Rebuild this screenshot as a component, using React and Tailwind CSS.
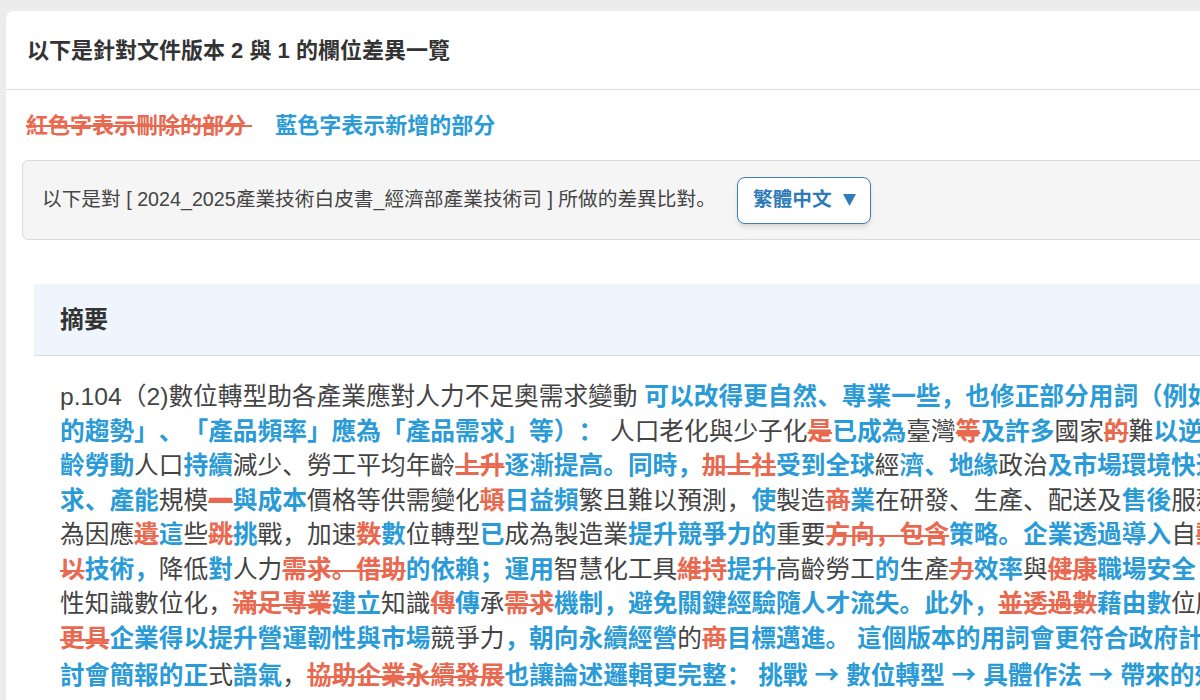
import React from "react";

// n = unchanged, a = added (blue), d = deleted (red, struck through)
const LINES = [
  [["n", "p.104（2)數位轉型助各產業應對人力不足奧需求變動 "], ["a", "可以改得更自然、專業一些，也修正部分用詞（例如「需求變動」應為「人力需求變化"]],
  [["a", "的趨勢」、「產品頻率」應為「產品需求」等）："], ["n", " 人口老化與少子化"], ["d", "是"], ["a", "已成為"], ["n", "臺灣"], ["d", "等"], ["a", "及許多"], ["n", "國家"], ["d", "的"], ["n", "難"], ["a", "以逆轉的趨勢，高"]],
  [["a", "齡勞動"], ["n", "人口"], ["a", "持續"], ["n", "減少、勞工平均年齡"], ["d", "上升"], ["a", "逐漸提高。同時，"], ["d", "加上社"], ["a", "受到全球"], ["n", "經"], ["a", "濟、地緣"], ["n", "政治"], ["a", "及市場環境快速變化，需"]],
  [["a", "求、產能"], ["n", "規模"], ["d", "一"], ["a", "與成本"], ["n", "價格等供需變化"], ["d", "頓"], ["a", "日益頻"], ["n", "繁且難以預測，"], ["a", "使"], ["n", "製造"], ["d", "商"], ["a", "業"], ["n", "在研發、生產、配送及"], ["a", "售後"], ["n", "服務等環節皆面臨挑戰。"]],
  [["n", "為因應"], ["d", "遺"], ["a", "這"], ["n", "些"], ["d", "跳"], ["a", "挑"], ["n", "戰，加速"], ["d", "数"], ["a", "數"], ["n", "位轉型"], ["a", "已"], ["n", "成為製造業"], ["a", "提升競爭力的"], ["n", "重要"], ["d", "方向，包含"], ["a", "策略。企業透過導入"], ["n", "自"], ["d", "動化設備，藉"]],
  [["d", "以"], ["a", "技術，"], ["n", "降低"], ["a", "對"], ["n", "人力"], ["d", "需求。借助"], ["a", "的依賴；運用"], ["n", "智慧化工具"], ["d", "維持"], ["a", "提升"], ["n", "高齡勞工"], ["a", "的"], ["n", "生產"], ["d", "力"], ["a", "效率"], ["n", "與"], ["d", "健康"], ["a", "職場安全，並將隱"]],
  [["n", "性知識數位化，"], ["d", "滿足專業"], ["a", "建立"], ["n", "知識"], ["d", "傳"], ["a", "傳"], ["n", "承"], ["d", "需求"], ["a", "機制，避免關鍵經驗隨人才流失。此外，"], ["d", "並透過數"], ["a", "藉由數"], ["n", "位應用，"]],
  [["d", "更具"], ["a", "企業得以提升營運韌性與市場"], ["n", "競爭力"], ["a", "，朝向永續經營"], ["n", "的"], ["d", "商"], ["a", "目標邁進。 這個版本的用詞會更符合政府計畫書或研"]],
  [["a", "討會簡報的正"], ["n", "式"], ["a", "語氣"], ["n", "，"], ["d", "協助企業永續發展"], ["a", "也讓論述邏輯更完整： 挑戰 "], ["ar", "→"], ["a", " 數位轉型 "], ["ar", "→"], ["a", " 具體作法 "], ["ar", "→"], ["a", " 帶來的效益。"]],
];

const Seg = ({ kind, text }) => {
  if (kind === "a") return <span className="font-bold text-[#2a9bd7]">{text}</span>;
  if (kind === "ar") return <span className="font-bold text-[#2a9bd7] font-['Noto_Sans_CJK_SC',sans-serif]">{text}</span>;
  if (kind === "d") return <span className="font-bold text-[#e8694f] line-through decoration-2">{text}</span>;
  return <span>{text}</span>;
};

export default function App() {
  return (
    <div className="w-[1200px] h-[700px] overflow-hidden bg-[#ececec] pl-[6px] pt-[11px] font-['Liberation_Sans','Noto_Sans_CJK_SC',sans-serif] [text-spacing-trim:space-all]">
      <div className="w-[1400px] min-h-[720px] bg-white rounded-tl-[8px]">
        {/* header */}
        <div className="h-[79px] border-b border-[#dcdcdc] flex items-center pl-[21px]">
          <h1 className="text-[22px] font-bold text-[#333]">以下是針對文件版本 2 與 1 的欄位差異一覽</h1>
        </div>

        <div className="px-4 pt-[20px]">
          {/* legend */}
          <div className="pl-[4px] h-[30px] flex items-center text-[22px] font-bold">
            <span className="text-[#e8694f] line-through decoration-2">紅色字表示刪除的部分&nbsp;</span>
            <span className="ml-[23px] text-[#2a9bd7]">藍色字表示新增的部分</span>
          </div>

          {/* info bar */}
          <div className="mt-[20px] h-[80px] border border-[#dedada] bg-[#f5f5f5] rounded-[6px] flex items-center pl-[19px] text-[19.7px] text-[#444]">
            <span>以下是對 [ 2024_2025產業技術白皮書_經濟部產業技術司 ] 所做的差異比對。</span>
            <button className="ml-[21px] h-[47px] pl-[15px] pr-[14px] flex items-center gap-[11px] bg-white border border-[#3a7fb5] rounded-[8px] shadow-md text-[19.7px] font-bold text-[#2f7ab8]">
              <span>繁體中文</span>
              <svg width="13" height="12" viewBox="0 0 13 12">
                <polygon points="0,0 13,0 6.5,12" fill="#2f7ab8" />
              </svg>
            </button>
          </div>
        </div>

        {/* section */}
        <div className="mt-[44px] ml-[28px]">
          <div className="h-[72px] bg-[#eef5fc] border-b border-[#dcdcdc] flex items-center pl-[26px] text-[24px] font-bold text-[#333]">
            摘要
          </div>
          <p className="pl-[26px] pt-[24px] text-[24.7px] leading-[34.5px] whitespace-nowrap text-[#444]">
            {LINES.map((line, i) => (
              <React.Fragment key={i}>
                {line.map(([k, t], j) => (
                  <Seg key={j} kind={k} text={t} />
                ))}
                {i < LINES.length - 1 && <br />}
              </React.Fragment>
            ))}
          </p>
        </div>
      </div>
    </div>
  );
}
